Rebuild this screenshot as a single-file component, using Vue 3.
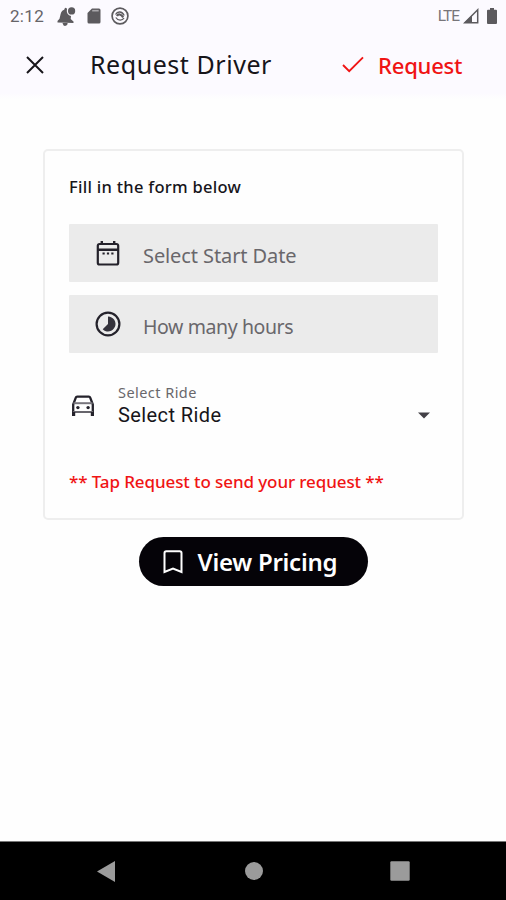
<script setup>
const fields = [
  { id: 'date', label: 'Select Start Date' },
  { id: 'hours', label: 'How many hours' },
]
</script>

<template>
  <div class="screen">
    <header class="top">
      <div class="status">
        <span class="clock">2:12</span>
        <svg class="bell" width="19" height="19" viewBox="0 0 19 19" fill="#5c5a5e">
          <path d="M.5 15.500V14l2-2.200 1.200-5C4.200 4.300 5.700 3.200 7.200 2.700L7.800 1.200q1-.8 2 .2l.2 1.300A5 5 0 0 0 14 9l-.3 3L16.500 14.500v1.500ZM5.500 16h5a2.300 2.300 0 0 1-4.600 1Z" />
          <circle cx="14.600" cy="3.900" r="3.600" />
        </svg>
        <svg class="sd" width="14" height="16" viewBox="0 0 14 16">
          <path d="M5 .5h7q1.500 0 1.500 1.500v12q0 1.500-1.500 1.500H2Q.5 15.500.5 14V5Z" fill="#5c5a5e" />
          <path d="M5.200 2.700h6.500" stroke="#a9a7ab" stroke-width="1.600" />
        </svg>
        <svg class="sync" width="18" height="18" viewBox="0 0 18 18" fill="none" stroke="#5c5a5e">
          <circle cx="9" cy="9" r="7.900" stroke-width="1.700" />
          <path d="M4.500 7.500C6.500 4 11 4 13.200 8.500M13 11C11.500 13.800 7 14 4.800 10.500" stroke-width="1.300" />
          <path d="M6 9C7 6.800 10 6.800 12.200 10.300" stroke-width="2.200" />
        </svg>
        <span class="lte">LTE</span>
        <svg class="signal" width="16" height="16" viewBox="0 0 16 16">
          <path d="M14.700 1.800V14.700H1.800Z" fill="none" stroke="#5c5a5e" stroke-width="1.500" />
          <path d="M9 7.200V15H1Z" fill="#5c5a5e" />
        </svg>
        <svg class="battery" width="10" height="16" viewBox="0 0 10 16" fill="#5c5a5e">
          <path d="M3 0h4v1.700h2q1 0 1 1V15q0 1-1 1H1q-1 0-1-1V2.700q0-1 1-1h2Z" />
        </svg>
      </div>
      <div class="toolbar">
        <svg class="close" width="18" height="18" viewBox="0 0 18 18" stroke="#17151a" stroke-width="2" fill="none">
          <path d="M1 1 17 17M17 1 1 17" />
        </svg>
        <span class="title">Request Driver</span>
        <svg class="check" width="22" height="17" viewBox="0 0 22 17" stroke="#f01414" stroke-width="1.900" fill="none">
          <path d="M1 9 7.200 15.200 21 1.400" />
        </svg>
        <span class="action">Request</span>
      </div>
    </header>

    <main class="body">
      <section class="card">
        <h2 class="heading">Fill in the form below</h2>
        <div v-for="f in fields" :key="f.id" class="field">
          <svg v-if="f.id === 'date'" class="ficon" width="26" height="26" viewBox="0 0 26 26" fill="none" stroke="#24222b">
            <rect x="2.800" y="4" width="20.400" height="20.500" rx="1.800" stroke-width="2.200" />
            <path d="M3 9.700H23M6.800 1V5M19.200 1V5" stroke-width="2.400" />
            <path d="M7.500 13.500h2.200M11.900 13.500h2.200M16.300 13.500h2.200" stroke-width="2" />
          </svg>
          <svg v-else class="ficon" width="26" height="26" viewBox="0 0 26 26">
            <circle cx="13" cy="13" r="11.400" fill="none" stroke="#24222b" stroke-width="2.200" />
            <path d="M13 5.500A7.500 7.500 0 1 1 7.700 18.300L13 13Z" fill="#34323b" />
          </svg>
          <span class="ftext" :class="f.id">{{ f.label }}</span>
        </div>
        <div class="ride">
          <svg class="car" width="24" height="22" viewBox="0 0 24 22">
            <path d="M2.200 19V9.500L4.700 2.800Q5.100 1.700 6.200 1.700H17.800Q18.900 1.700 19.300 2.800L21.800 9.500V19" fill="none" stroke="#24222b" stroke-width="2.300" />
            <path d="M2.500 8.200h19" stroke="#77757c" stroke-width="2" />
            <path d="M2 17h20" stroke="#67656c" stroke-width="2" />
            <path d="M1 17h3.200v4H1ZM19.800 17H23v4h-3.200Z" fill="#24222b" />
            <circle cx="6.900" cy="12.600" r="1.700" fill="#24222b" />
            <circle cx="17.100" cy="12.600" r="1.700" fill="#24222b" />
          </svg>
          <div class="select">
            <span class="label">Select Ride</span>
            <span class="value">Select Ride</span>
          </div>
          <svg class="arrow" width="12" height="7" viewBox="0 0 12 7"><path d="M0 .5H12L6 6.500Z" fill="#424046" /></svg>
        </div>
        <p class="note">** Tap Request to send your request **</p>
      </section>

      <button class="pricing">
        <svg width="20" height="24" viewBox="0 0 20 24" fill="none" stroke="#fff" stroke-width="2">
          <path d="M1.500 22V3Q1.500 1.200 3.300 1.200H16.700Q18.500 1.200 18.500 3V22L10 18.500Z" />
        </svg>
        <span class="ptext">View Pricing</span>
      </button>
    </main>

    <nav class="nav">
      <svg width="18" height="21" viewBox="0 0 18 21"><path d="M0 10.500 18 0V21Z" fill="#9b9b9b" /></svg>
      <svg class="home" width="18" height="18" viewBox="0 0 18 18"><circle cx="9" cy="9" r="9" fill="#9b9b9b" /></svg>
      <svg width="20" height="20" viewBox="0 0 20 20"><rect x=".3" y=".3" width="19.400" height="19.400" rx="1.200" fill="#9b9b9b" /></svg>
    </nav>
  </div>
</template>

<style>
body { background: #fefefe; }
</style>

<style scoped>
.screen {
  width: 506px;
  height: 900px;
  display: flex;
  flex-direction: column;
  overflow: hidden;
  background: #fefefe;
  font-family: "Noto Sans", "Open Sans", sans-serif;
  color: #17151a;
}
span, h2, p { white-space: nowrap; }
svg { display: block; flex: none; }
.top { height: 99px; background: linear-gradient(#fcfaff 94%, #fefefe); }
.status { height: 32px; display: flex; align-items: center; padding: 0 9px 0 10px; box-sizing: border-box; }
.clock { width: 47px; font: 17px/32px Roboto, sans-serif; letter-spacing: .3px; color: #666468; }
.sd { margin-left: 11px; }
.sync { margin-left: 10px; }
.lte { margin-left: auto; font: 15.500px/32px Roboto, sans-serif; letter-spacing: -1px; color: #77757a; }
.signal { margin-left: 4px; }
.battery { margin-left: 8px; }
.toolbar { height: 65px; display: flex; align-items: center; padding-left: 26px; }
.title { width: 252px; margin-left: 46px; font-size: 25px; line-height: 65px; letter-spacing: .55px; }
.action { margin-left: 14px; padding-top: 2px; font-size: 22px; line-height: 63px; font-weight: 500; letter-spacing: -.2px; color: #f01414; }
.body { flex: 1; display: flex; flex-direction: column; align-items: center; }
.card {
  width: 421px;
  height: 371px;
  margin: 50px 0 0 1px;
  box-sizing: border-box;
  border: 2px solid #eee;
  border-radius: 5px;
  padding: 24px 24px 0;
}
.heading { margin: 0 0 25px; font-size: 16.500px; line-height: 24px; font-weight: 500; letter-spacing: .28px; }
.field {
  height: 58px;
  margin-bottom: 13px;
  background: #ebebeb;
  border-radius: 1px;
  display: flex;
  align-items: center;
  padding-left: 26px;
}
.ftext { margin-left: 22px; padding-top: 5px; font-size: 20px; line-height: 28px; letter-spacing: -.1px; color: #69676b; }
.ftext.hours { font-size: 19.500px; letter-spacing: -.4px; }
.ride { display: flex; align-items: center; height: 53px; margin-top: 26px; padding: 0 8px 0 2px; }
.select { display: flex; flex-direction: column; margin-left: 23px; margin-right: auto; }
.label { font-size: 14.500px; line-height: 20px; letter-spacing: .45px; color: #69676b; }
.value { font: 20px/27px Roboto, sans-serif; letter-spacing: .4px; }
.arrow { margin-top: 20px; }
.note { margin: 38px 0 0; font-size: 17px; line-height: 24px; font-weight: 500; letter-spacing: -.1px; color: #f01414; }
.pricing {
  width: 229px;
  height: 49px;
  margin-top: 17px;
  border: 0;
  border-radius: 25px;
  background: #050308;
  color: #fff;
  display: flex;
  align-items: center;
  padding: 0 0 0 24px;
  font-family: inherit;
}
.ptext { margin-left: 15px; font-size: 24px; line-height: 34px; font-weight: 600; letter-spacing: -.25px; }
.nav {
  height: 59px;
  box-sizing: border-box;
  border-top: 1px solid #777;
  background: #000;
  display: flex;
  align-items: center;
  justify-content: space-between;
  padding: 0 96px 0 97px;
}
.home { margin-left: 2px; }
</style>
